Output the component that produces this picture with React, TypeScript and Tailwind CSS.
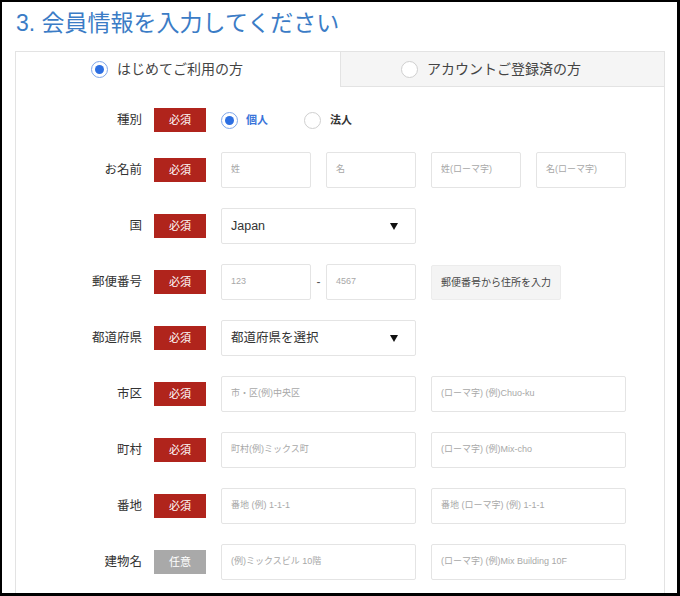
import React from "react";

const FONT = { fontFamily: '"Liberation Sans", "Noto Sans CJK JP", sans-serif' };

function Radio({ checked }: { checked: boolean }) {
  return checked ? (
    <span className="flex h-[17px] w-[17px] shrink-0 items-center justify-center rounded-full border border-[#7ea6ea] bg-white">
      <span className="block h-[9px] w-[9px] rounded-full bg-[#2d6fe2]" />
    </span>
  ) : (
    <span className="block h-[17px] w-[17px] shrink-0 rounded-full border border-[#cfcfcf] bg-white" />
  );
}

function Badge({ optional }: { optional?: boolean }) {
  return (
    <span
      className={
        "flex h-[24px] w-[52px] shrink-0 items-center justify-center text-[11px] text-white " +
        (optional ? "bg-[#a9a9a9]" : "bg-[#b0241c]")
      }
    >
      {optional ? "任意" : "必須"}
    </span>
  );
}

function Input({ ph, wide }: { ph: string; wide?: boolean }) {
  return (
    <div
      className={
        "flex h-[36px] shrink-0 items-center rounded-[2px] border border-[#e4e4e4] bg-white pl-[9px] text-[9px] text-[#a8a8a8] " +
        (wide ? "w-[195px]" : "w-[90px]")
      }
    >
      {ph}
    </div>
  );
}

function Select({ value }: { value: string }) {
  return (
    <div className="flex h-[36px] w-[195px] shrink-0 items-center justify-between rounded-[2px] border border-[#e4e4e4] bg-white pl-[9px] pr-[17px] text-[12.5px] text-[#333]">
      <span>{value}</span>
      <svg width="8" height="7" viewBox="0 0 8 7">
        <polygon points="0,0 8,0 4,7" fill="#111" />
      </svg>
    </div>
  );
}

function Row({ label, optional, children, h = "h-[36px]" }: { label: string; optional?: boolean; children: React.ReactNode; h?: string }) {
  return (
    <div className={"flex items-center " + h}>
      <div className="w-[126px] shrink-0 text-right text-[12.5px] text-[#333]">{label}</div>
      <div className="ml-[12px]">
        <Badge optional={optional} />
      </div>
      <div className="ml-[15px] flex items-center gap-[15px]">{children}</div>
    </div>
  );
}

export default function App() {
  return (
    <div
      className="h-[596px] w-[680px] overflow-hidden border-b-[3px] border-l-2 border-r-[3px] border-t-2 border-black bg-white"
      style={FONT}
    >
      <div className="pl-[14px] pt-[5px]">
        <h1 className="h-[32px] text-[23px] leading-[32px] text-[#3b7cc6]">3. 会員情報を入力してください</h1>
      </div>
      <div className="ml-[13px] mt-[12px] w-[650px]">
        <div className="flex h-[36px]">
          <div className="flex w-[325px] items-center gap-[9px] border-l border-t border-[#e3e3e3] bg-white pl-[75px] text-[14px] text-[#444]">
            <Radio checked />
            <span>はじめてご利用の方</span>
          </div>
          <div className="flex w-[325px] items-center gap-[9px] border border-[#e3e3e3] bg-[#f5f5f5] pl-[60px] text-[14px] text-[#444]">
            <Radio checked={false} />
            <span>アカウントご登録済の方</span>
          </div>
        </div>
        <div className="flex h-[600px] flex-col gap-[20px] border-l border-r border-[#e3e3e3] pt-[21px]">
          <Row label="種別" h="h-[24px]">
            <div className="flex items-center">
              <Radio checked />
              <span className="ml-[8px] text-[11px] font-bold text-[#3a74d9]">個人</span>
              <span className="ml-[36px] flex">
                <Radio checked={false} />
              </span>
              <span className="ml-[9px] text-[11px] font-bold text-[#333]">法人</span>
            </div>
          </Row>
          <Row label="お名前">
            <Input ph="姓" />
            <Input ph="名" />
            <Input ph="姓(ローマ字)" />
            <Input ph="名(ローマ字)" />
          </Row>
          <Row label="国">
            <Select value="Japan" />
          </Row>
          <Row label="郵便番号">
            <div className="flex items-center">
              <Input ph="123" />
              <span className="w-[15px] text-center text-[12px] text-[#555]">-</span>
              <Input ph="4567" />
            </div>
            <div className="flex h-[35px] w-[130px] items-center justify-center rounded-[2px] border border-[#ececec] bg-[#f4f4f4] text-[10px] text-[#444]">
              郵便番号から住所を入力
            </div>
          </Row>
          <Row label="都道府県">
            <Select value="都道府県を選択" />
          </Row>
          <Row label="市区">
            <Input wide ph="市・区(例)中央区" />
            <Input wide ph="(ローマ字) (例)Chuo-ku" />
          </Row>
          <Row label="町村">
            <Input wide ph="町村(例)ミックス町" />
            <Input wide ph="(ローマ字) (例)Mix-cho" />
          </Row>
          <Row label="番地">
            <Input wide ph="番地 (例) 1-1-1" />
            <Input wide ph="番地 (ローマ字) (例) 1-1-1" />
          </Row>
          <Row label="建物名" optional>
            <Input wide ph="(例)ミックスビル 10階" />
            <Input wide ph="(ローマ字) (例)Mix Building 10F" />
          </Row>
        </div>
      </div>
    </div>
  );
}
